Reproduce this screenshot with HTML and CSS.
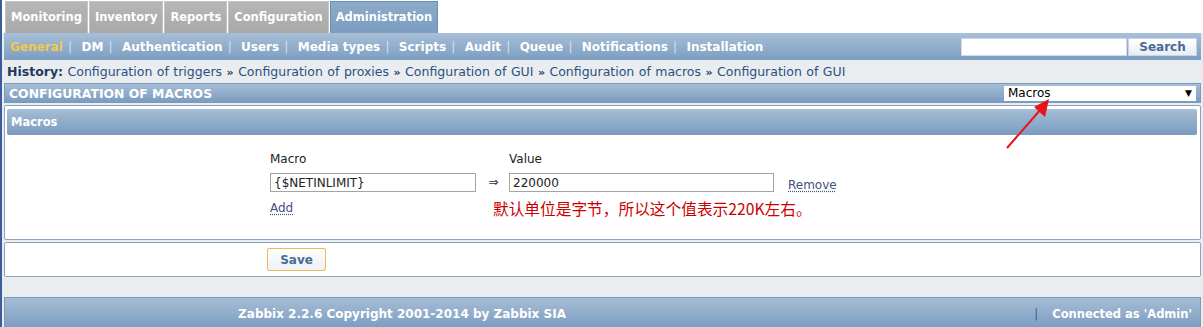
FILE: index.html
```html
<!DOCTYPE html>
<html lang="en">
<head>
    <meta charset="UTF-8">
    <title>Configuration of macros</title>
    <link rel="stylesheet" href="styles.css">
</head>
<body>
<div class="page">
    <div class="tabs">
        <a class="tab">Monitoring</a>
        <a class="tab">Inventory</a>
        <a class="tab">Reports</a>
        <a class="tab">Configuration</a>
        <a class="tab active">Administration</a>
    </div>

    <div class="submenu">
        <div class="sublinks">
            <a class="current">General</a><span class="sep">|</span>
            <a>DM</a><span class="sep">|</span>
            <a>Authentication</a><span class="sep">|</span>
            <a>Users</a><span class="sep">|</span>
            <a>Media types</a><span class="sep">|</span>
            <a>Scripts</a><span class="sep">|</span>
            <a>Audit</a><span class="sep">|</span>
            <a>Queue</a><span class="sep">|</span>
            <a>Notifications</a><span class="sep">|</span>
            <a>Installation</a>
        </div>
        <form class="search">
            <input type="text" class="search-input">
            <button type="button" class="search-btn">Search</button>
        </form>
    </div>

    <div class="history">
        <b>History:</b>
        <a>Configuration of triggers</a> <span class="raquo">&raquo;</span>
        <a>Configuration of proxies</a> <span class="raquo">&raquo;</span>
        <a>Configuration of GUI</a> <span class="raquo">&raquo;</span>
        <a>Configuration of macros</a> <span class="raquo">&raquo;</span>
        <a>Configuration of GUI</a>
    </div>

    <div class="titlebar">
        <span>CONFIGURATION OF MACROS</span>
        <div class="select">Macros<span class="caret">&#9660;</span></div>
    </div>

    <div class="box">
        <div class="box-head">Macros</div>
        <div class="macro-grid">
            <div class="lbl">Macro</div>
            <div></div>
            <div class="lbl">Value</div>
            <div></div>

            <input class="field field-macro" type="text" value="{$NETINLIMIT}">
            <div class="arrow">&rArr;</div>
            <input class="field field-value" type="text" value="220000">
            <a class="link">Remove</a>

            <a class="link add">Add</a>
            <div class="note">默认单位是字节，所以这个值表示220K左右。</div>
        </div>
    </div>

    <div class="box savebox">
        <button type="button" class="save">Save</button>
    </div>

    <div class="footer">
        <div class="copy">Zabbix 2.2.6 Copyright 2001-2014 by Zabbix SIA</div>
        <div class="conn"><span class="sep">|</span>Connected as 'Admin'</div>
    </div>

    <!-- red annotation arrow -->
    <svg class="pointer" width="60" height="60" viewBox="0 0 60 60">
        <line x1="4" y1="52" x2="38" y2="13" stroke="#e8141a" stroke-width="2"/>
        <polygon points="46,3 42,21 31,11" fill="#e8141a"/>
    </svg>
</div>
</body>
</html>
```

FILE: styles.css
```css
body {
    margin: 0;
    background: #e9edf0;
    font-family: "DejaVu Sans", Verdana, sans-serif;
    font-size: 11px;
    color: #1f3a60;
}
.page {
    position: relative;
    min-height: 327px;
    border-left: 2px solid #3b5da0;
    padding: 0 2px 0 2px;
}
a {
    cursor: pointer;
}

/* top tabs */
.tabs {
    display: flex;
    gap: 1px;
    background: #fff;
    height: 33px;
    margin: 0 -2px 0 -2px;
    padding: 1px 0 0 3px;
    box-sizing: border-box;
}
.tab {
    display: flex;
    align-items: center;
    padding: 0 5px 1px;
    background: linear-gradient(#b6b6b6, #a9a9a9);
    border: 1px solid #c4c4c4;
    border-bottom: none;
    color: #fff;
    font-weight: bold;
    font-size: 11.5px;
}
.tab.active {
    background: linear-gradient(#8cabca, #7b9dc0);
    border-color: #6a8db3;
}

/* submenu */
.submenu {
    display: flex;
    align-items: center;
    justify-content: space-between;
    height: 27px;
    background: linear-gradient(#a8bfd7, #7c9ec1);
    padding: 0 4px 0 6px;
}
.sublinks {
    color: #fff;
    font-weight: bold;
    font-size: 12px;
}
.sublinks a {
    color: #fff;
}
.sublinks a.current {
    color: #f2c94c;
}
.sublinks .sep {
    font-weight: normal;
    color: #d7e1ec;
    margin: 0 5.2px;
}
.search {
    display: flex;
    margin-top: 1px;
}
.search-input {
    width: 166px;
    height: 18px;
    box-sizing: border-box;
    border: 1px solid #d0dae6;
    margin: 0;
}
.search-btn {
    width: 69px;
    height: 18px;
    margin: 0 0 0 1px;
    padding: 0;
    border: 1px solid #c8d4e2;
    background: linear-gradient(#ffffff, #e8eef5);
    color: #4a6b95;
    font-family: inherit;
    font-weight: bold;
    font-size: 12px;
}

/* history */
.history {
    height: 23px;
    line-height: 23px;
    padding-left: 3px;
    font-size: 12.5px;
    color: #2c4f80;
    white-space: nowrap;
    word-spacing: 0.5px;
}
.history b {
    color: #1f3a60;
}
.raquo {
    font-weight: bold;
    font-size: 11px;
    color: #1f3a60;
}

/* title bar */
.titlebar {
    display: flex;
    justify-content: space-between;
    align-items: center;
    height: 18px;
    background: linear-gradient(#a6bdd6, #7a9cbf);
    border: 1px solid #7f99b8;
    padding-left: 4px;
    color: #fff;
    font-weight: bold;
    font-size: 12.4px;
}
.select {
    display: flex;
    justify-content: space-between;
    width: 184px;
    height: 15px;
    line-height: 15px;
    margin-right: 4px;
    padding: 0 4px;
    background: #fff;
    color: #000;
    font-weight: normal;
    font-size: 12px;
}
.caret {
    font-size: 9px;
}

/* boxes */
.box {
    margin-top: 2px;
    background: #fff;
    border: 1px solid #8ea2bb;
    border-radius: 2px;
    padding: 3px 3px 0 2px;
    height: 135px;
    box-sizing: border-box;
}
.box-head {
    height: 26px;
    line-height: 26px;
    padding-left: 4px;
    background: linear-gradient(#a6bdd6, #7a9cbf);
    border-radius: 2px;
    color: #fff;
    font-weight: bold;
    font-size: 11.5px;
}
.macro-grid {
    display: grid;
    grid-template-columns: 206px 33px 265px auto;
    grid-template-rows: 20px 19px 30px;
    row-gap: 7px;
    margin: 11px 0 0 263px;
    font-size: 12px;
    color: #333;
}
.lbl {
    align-self: end;
    color: #222;
}
.field {
    margin: 0;
    height: 19px;
    box-sizing: border-box;
    border: 1px solid #a5a59c;
    padding: 0 3px;
    font-family: inherit;
    font-size: 12px;
    color: #222;
}
.arrow {
    font-size: 12px;
    text-align: center;
    line-height: 19px;
    padding-left: 2px;
    color: #333;
}
.link {
    color: #45507a;
    text-decoration: underline dotted;
    text-underline-offset: 2px;
    margin-left: 14px;
    align-self: end;
    margin-bottom: 0;
}
.add {
    margin: 2px 0 0 0;
    align-self: start;
}
.note {
    grid-column: 2 / 5;
    margin-left: 17px;
    margin-top: 1px;
    color: #cc0000;
    font-family: "Noto Sans CJK SC", sans-serif;
    font-size: 15.7px;
    line-height: 18px;
}
.savebox {
    height: 35px;
    padding: 5px 0 0 262px;
}
.save {
    width: 59px;
    height: 23px;
    border: 1px solid #f0b858;
    border-radius: 2px;
    background: linear-gradient(#fbfcfd, #eef2f6);
    color: #4a6b95;
    font-family: inherit;
    font-weight: bold;
    font-size: 12px;
}

/* footer */
.footer {
    display: flex;
    align-items: center;
    margin-top: 20px;
    height: 31px;
    background: linear-gradient(#a6bdd6, #7a9cbf);
    border: 1px solid #7f99b8;
    border-bottom: none;
    color: #fff;
    font-weight: bold;
    font-size: 12px;
}
.copy {
    width: 794px;
    text-align: center;
}
.conn {
    flex: 1;
    text-align: right;
    padding-right: 8px;
    font-size: 11.5px;
}
.conn .sep {
    font-weight: normal;
    color: #3e5e88;
    margin-right: 14px;
}

.pointer {
    position: absolute;
    left: 1001px;
    top: 96px;
}
```
